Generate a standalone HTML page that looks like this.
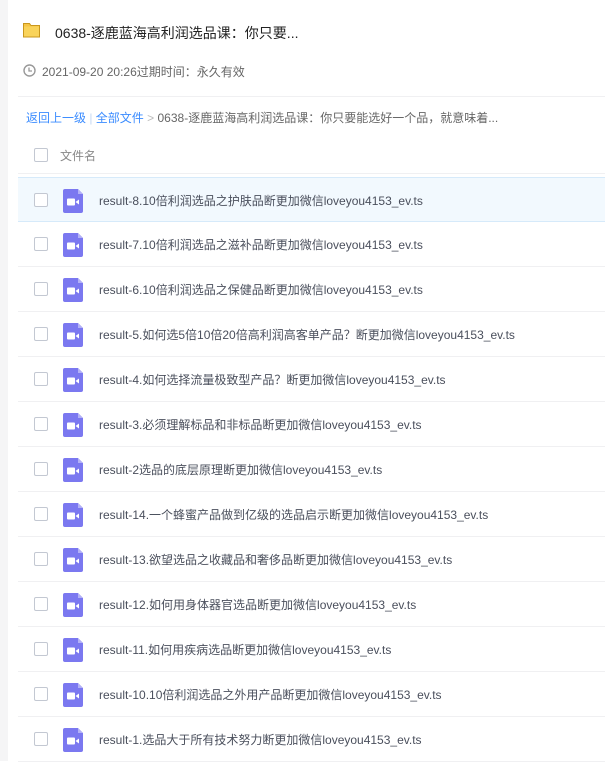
<!DOCTYPE html>
<html><head><meta charset="utf-8"><style>
*{margin:0;padding:0;box-sizing:border-box}
body{width:605px;height:761px;overflow:hidden;background:#fff;font-family:"Liberation Sans","Noto Sans CJK SC",sans-serif;position:relative}
.gut{position:absolute;left:0;top:0;width:8px;height:761px;background:#f5f5f6}
.abs{position:absolute;white-space:nowrap}
.line{position:absolute;left:18px;right:0;height:1px;background:#f0f0f2}
.cb{position:absolute;left:34px;width:14px;height:14px;border:1px solid #c3c8d2;border-radius:2px;background:#fff}
.row{position:absolute;left:18px;right:0;height:45px;border-bottom:1px solid #f0f0f2}
.row.hl{background:#f2f9fe;border-top:1px solid #d6eafa;border-bottom:1px solid #d6eafa}
.row .cb{left:16px;top:15px}
.row svg{position:absolute;left:45px;top:11px}
.row span{position:absolute;left:81px;top:14px;font-size:12px;color:#4a4f5c}
</style></head><body>
<div class="gut"></div>
<svg class="abs" style="left:23px;top:21px" width="17" height="17" viewBox="0 0 17 17"><path d="M0.5 2.5h6l1.5 2h8.5v11.5h-16z" fill="#f6c545" stroke="#c9971d"/><rect x="1" y="5.5" width="15" height="10" fill="#f9d35a"/></svg>
<div class="abs" style="left:55px;top:23px;font-size:14px;color:#222">0638-逐鹿蓝海高利润选品课：你只要...</div>
<svg class="abs" style="left:23px;top:64px" width="13" height="13" viewBox="0 0 13 13"><circle cx="6.5" cy="6.5" r="5.5" fill="none" stroke="#999" stroke-width="1.4"/><path d="M6 3.5v3.5h3" fill="none" stroke="#999" stroke-width="1.3"/></svg>
<div class="abs" style="left:42px;top:63px;font-size:12px;color:#666">2021-09-20 20:26过期时间：永久有效</div>
<div class="line" style="top:96px"></div>
<div class="abs" style="left:26px;top:109px;font-size:12px;color:#3b8cff">返回上一级 <span style="color:#c4d8f3">|</span> 全部文件 <span style="color:#bbb">&gt;</span> <span style="color:#666">0638-逐鹿蓝海高利润选品课：你只要能选好一个品，就意味着...</span></div>
<div class="cb" style="top:148px"></div>
<div class="abs" style="left:60px;top:147px;font-size:12px;color:#888">文件名</div>
<div class="line" style="top:173px"></div>
<div id="rows"></div>
<script>
var n=["result-8.10倍利润选品之护肤品断更加微信loveyou4153_ev.ts","result-7.10倍利润选品之滋补品断更加微信loveyou4153_ev.ts","result-6.10倍利润选品之保健品断更加微信loveyou4153_ev.ts","result-5.如何选5倍10倍20倍高利润高客单产品？断更加微信loveyou4153_ev.ts","result-4.如何选择流量极致型产品？断更加微信loveyou4153_ev.ts","result-3.必须理解标品和非标品断更加微信loveyou4153_ev.ts","result-2选品的底层原理断更加微信loveyou4153_ev.ts","result-14.一个蜂蜜产品做到亿级的选品启示断更加微信loveyou4153_ev.ts","result-13.欲望选品之收藏品和奢侈品断更加微信loveyou4153_ev.ts","result-12.如何用身体器官选品断更加微信loveyou4153_ev.ts","result-11.如何用疾病选品断更加微信loveyou4153_ev.ts","result-10.10倍利润选品之外用产品断更加微信loveyou4153_ev.ts","result-1.选品大于所有技术努力断更加微信loveyou4153_ev.ts"];
var h="";
for(var i=0;i<n.length;i++){
h+='<div class="row'+(i==0?' hl':'')+'" style="top:'+(177+45*i)+'px"><div class="cb"></div><svg width="20" height="24" viewBox="0 0 20 24"><path d="M2 0h13l5 5v17a2 2 0 0 1-2 2H2a2 2 0 0 1-2-2V2a2 2 0 0 1 2-2z" fill="#7b78f0"/><path d="M15 0v5h5z" fill="#b3b1f7"/><rect x="4" y="9.5" width="8" height="7" rx="1" fill="#fff"/><path d="M12.5 13l3.5-2.5v5z" fill="#fff"/></svg><span>'+n[i]+'</span></div>';
}
document.getElementById("rows").innerHTML=h;
</script>
</body></html>
